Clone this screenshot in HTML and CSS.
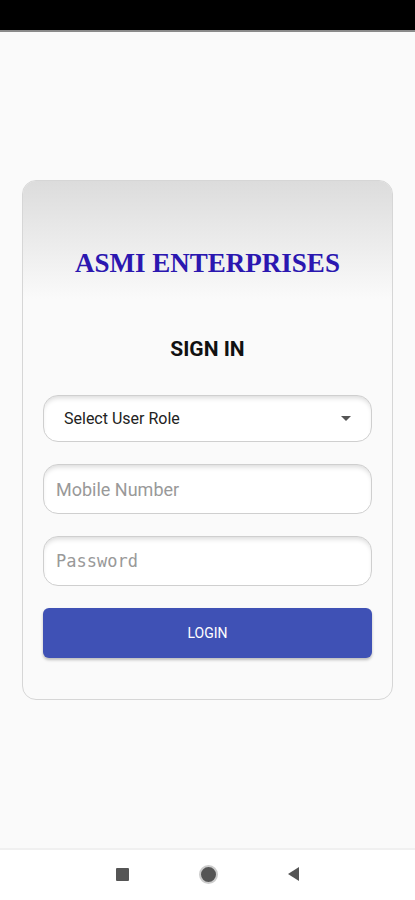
FILE: index.html
```html
<!DOCTYPE html>
<html lang="en">
<head>
    <meta charset="UTF-8">
    <meta name="viewport" content="width=device-width, initial-scale=1.0">
    <title>Asmi Enterprises - Sign In</title>
    <link rel="stylesheet" href="styles.css">
</head>
<body>

    <div class="status-bar"></div>

    <main class="screen">
        <div class="card">
            <div class="card-head">
                <h1 class="brand">ASMI ENTERPRISES</h1>
            </div>

            <h2 class="title">SIGN IN</h2>

            <form class="login-form">
                <div class="select-box">
                    <span>Select User Role</span>
                    <span class="caret"></span>
                </div>

                <input type="text" class="field" placeholder="Mobile Number">
                <input type="password" class="field mono" placeholder="Password">

                <button type="submit" class="login-btn">LOGIN</button>
            </form>
        </div>
    </main>

    <nav class="nav-bar">
        <span class="nav-square"></span>
        <span class="nav-circle"></span>
        <svg class="nav-back" width="12" height="14" viewBox="0 0 12 14">
            <path d="M11 0 L11 14 L0 7 Z" fill="#555"/>
        </svg>
    </nav>

</body>
</html>
```

FILE: styles.css
```css
body {
    margin: 0;
    font-family: Roboto, "Liberation Sans", sans-serif;
    background-color: #fafafa;
    height: 900px;
    display: flex;
    flex-direction: column;
}
.status-bar {
    height: 30px;
    background: #000;
    border-bottom: 2px solid #8a8a8a;
}
.screen {
    flex: 1;
    padding: 148px 22px 0 22px;
}
.card {
    border: 1px solid #d6d6d6;
    border-radius: 14px;
    height: 518px;
    background: #fafafa;
    overflow: hidden;
}
.card-head {
    height: 118px;
    background: linear-gradient(#dcdcdc, #fafafa);
    display: flex;
    align-items: flex-end;
    justify-content: center;
}
.brand {
    margin: 0 0 20px 0;
    font-family: "Liberation Serif", serif;
    font-weight: bold;
    font-size: 27px;
    color: #2b17b0;
}
.title {
    margin: 38px 0 0 0;
    text-align: center;
    font-size: 21px;
    font-weight: bold;
    color: #111;
}
.login-form {
    padding: 34px 20px 0 20px;
    display: flex;
    flex-direction: column;
    gap: 22px;
}
.select-box, .field {
    box-sizing: border-box;
    height: 50px;
    border: 1px solid #cfcfcf;
    border-radius: 15px;
    background: #fff;
    box-shadow: inset 0 4px 5px -2px rgba(0, 0, 0, 0.15);
}
.select-box {
    height: 47px;
    display: flex;
    align-items: center;
    justify-content: space-between;
    padding: 0 20px 0 20px;
    font-size: 16px;
    color: #222;
}
.caret {
    width: 0;
    height: 0;
    border-left: 5px solid transparent;
    border-right: 5px solid transparent;
    border-top: 5px solid #555;
}
.field {
    width: 100%;
    padding: 0 12px;
    font-family: Roboto, "Liberation Sans", sans-serif;
    font-size: 18px;
    outline: none;
}
.field::placeholder {
    color: #999;
}
.field.mono {
    font-family: "DejaVu Sans Mono", monospace;
    font-size: 17px;
}
.login-btn {
    height: 50px;
    background: #3f51b5;
    color: #fff;
    border: none;
    border-radius: 6px;
    font-family: Roboto, "Liberation Sans", sans-serif;
    font-size: 14px;
    font-weight: normal;
    box-shadow: 0 2px 3px rgba(0, 0, 0, 0.25);
    cursor: pointer;
}
.nav-bar {
    height: 48px;
    background: #fff;
    border-top: 2px solid #f0f0f0;
    display: flex;
    align-items: center;
    justify-content: center;
    gap: 70px;
    padding-bottom: 2px;
}
.nav-square {
    width: 13px;
    height: 13px;
    background: #555;
    border-radius: 1px;
}
.nav-circle {
    width: 15px;
    height: 15px;
    background: #555;
    border-radius: 50%;
    border: 2px solid #ccc;
}
```
